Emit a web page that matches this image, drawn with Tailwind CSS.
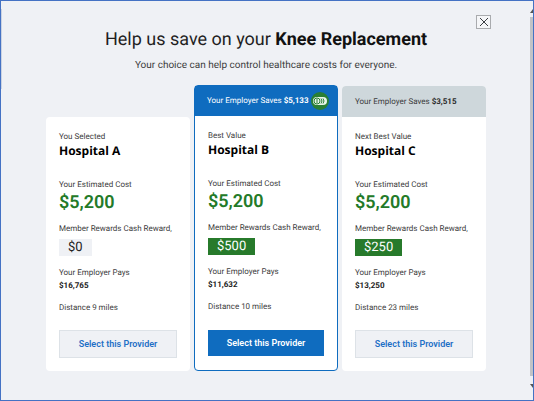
<!DOCTYPE html>
<html lang="en">
<head>
    <meta charset="UTF-8">
    <meta name="viewport" content="width=device-width, initial-scale=1.0">
    <title>Knee Replacement | Compare Providers</title>
    <script src="https://cdn.jsdelivr.net/npm/@tailwindcss/browser@4"></script>
</head>
<body class="min-h-screen flex bg-[#eff1f5] border border-[#4472c4] font-[Roboto,sans-serif] antialiased [text-rendering:geometricPrecision] text-[#3c3c3c]">
    <!-- Left edge of the panel -->
    <div class="w-px h-20 mt-2 bg-[#cbd3e2]"></div>

    <main class="flex-1 px-[39px] pb-7">
        <div class="flex justify-end pt-3.5">
            <button aria-label="Close" class="w-[15px] h-[14px] flex items-center justify-center border border-[#a9abae] bg-[#f5f6f8]">
                <svg class="w-2.5 h-2.5" viewBox="0 0 10 10" fill="none" stroke="#3a3d42">
                    <path d="M1 1l8 8M9 1l-8 8" />
                </svg>
            </button>
        </div>

        <header class="mt-px text-center">
            <h1 class="text-[18px] leading-5 text-[#1f1f1f]">Help us save on your <b class="font-bold text-[#111]">Knee Replacement</b></h1>
            <p class="mt-2 text-[10px] leading-4">Your choice can help control healthcare costs for everyone.</p>
        </header>

        <div class="mt-[11px] px-[5px] grid grid-cols-3 gap-1 text-[8px] leading-[10px]">
            <!-- Hospital A -->
            <section class="mt-8 flex flex-col items-start rounded bg-white px-[13px] pt-[15px] pb-[13px]">
                <p>You Selected</p>
                <h2 class="mt-px font-['Open_Sans',sans-serif] text-[12px] leading-4 font-bold text-black">Hospital A</h2>
                <p class="mt-[21px]">Your Estimated Cost</p>
                <p class="mt-[3px] text-[18px] leading-5 font-semibold text-[#237a28]">$5,200</p>
                <p class="mt-[11px] whitespace-nowrap">Member Rewards Cash Reward,</p>
                <p class="mt-[5px] px-[9px] bg-[#eff1f5] text-[13px] leading-[17px] text-[#222]">$0</p>
                <p class="mt-3">Your Employer Pays</p>
                <p class="mt-[3px] font-bold text-[#222]">$16,765</p>
                <p class="mt-3">Distance 9 miles</p>
                <button class="mt-auto w-full h-7 border border-[#dde2e7] bg-[#eff1f5] text-[9px] font-semibold text-[#1f70c6]">Select this Provider</button>
            </section>

            <!-- Hospital B -->
            <section class="flex flex-col rounded border border-[#0f6cbf] bg-white">
                <div class="h-[30px] flex items-center gap-0.5 pl-3 bg-[#0f6cbf] text-white">
                    <p class="whitespace-nowrap">Your Employer Saves <b>$5,133</b></p>
                    <svg class="w-[18px] h-[18px] shrink-0" viewBox="0 0 18 18" fill="none">
                        <circle cx="9" cy="9" r="9" fill="#2a7f35" />
                        <rect x="2" y="5" width="14" height="8" rx="4" fill="#e9f5ea" />
                        <circle cx="6" cy="9" r="3" stroke="#2a7f35" />
                        <path d="M6 7v4M10 6.500q2 2.500 0 5M12 6.500q2 2.500 0 5" stroke="#2a7f35" />
                    </svg>
                </div>
                <div class="flex-1 flex flex-col items-start px-[13px] pt-[15px] pb-3.5">
                    <p>Best Value</p>
                    <h2 class="mt-px font-['Open_Sans',sans-serif] text-[12px] leading-4 font-bold text-black">Hospital B</h2>
                    <p class="mt-[21px]">Your Estimated Cost</p>
                    <p class="mt-[3px] text-[18px] leading-5 font-semibold text-[#237a28]">$5,200</p>
                    <p class="mt-[11px] whitespace-nowrap">Member Rewards Cash Reward,</p>
                    <p class="mt-[5px] px-[9px] bg-[#277a2b] text-[13px] leading-[17px] text-white">$500</p>
                    <p class="mt-3">Your Employer Pays</p>
                    <p class="mt-[3px] font-bold text-[#222]">$11,632</p>
                    <p class="mt-3">Distance 10 miles</p>
                    <button class="mt-auto w-full h-[26px] bg-[#0f6cbf] text-[9px] font-semibold text-white">Select this Provider</button>
                </div>
            </section>

            <!-- Hospital C -->
            <section class="mt-px flex flex-col rounded bg-white">
                <div class="h-[31px] flex items-center pl-[13px] rounded-t bg-[#ced7db]">
                    <p class="whitespace-nowrap">Your Employer Saves <b class="text-[#2b2b2b]">$3,515</b></p>
                </div>
                <div class="flex-1 flex flex-col items-start px-[13px] pt-[15px] pb-[13px]">
                    <p>Next Best Value</p>
                    <h2 class="mt-px font-['Open_Sans',sans-serif] text-[12px] leading-4 font-bold text-black">Hospital C</h2>
                    <p class="mt-[21px]">Your Estimated Cost</p>
                    <p class="mt-[3px] text-[18px] leading-5 font-semibold text-[#237a28]">$5,200</p>
                    <p class="mt-[11px] whitespace-nowrap">Member Rewards Cash Reward,</p>
                    <p class="mt-[5px] px-[9px] bg-[#277a2b] text-[13px] leading-[17px] text-white">$250</p>
                    <p class="mt-3">Your Employer Pays</p>
                    <p class="mt-[3px] font-bold text-[#222]">$13,250</p>
                    <p class="mt-3">Distance 23 miles</p>
                    <button class="mt-[17px] w-full h-7 border border-[#dde2e7] bg-[#eff1f5] text-[9px] font-semibold text-[#1f70c6]">Select this Provider</button>
                </div>
            </section>
        </div>
    </main>

    <!-- Scrollbar -->
    <div class="w-[3px] flex flex-col pt-2 pb-3 gap-1">
        <svg class="w-[3px] h-1" viewBox="0 0 3 4"><path d="M3 0v4H0z" fill="#555" /></svg>
        <div class="flex-1 bg-[#c1c3c7]"></div>
        <svg class="mt-1 w-[3px] h-1" viewBox="0 0 3 4"><path d="M3 4V0H0z" fill="#555" /></svg>
    </div>
</body>
</html>
